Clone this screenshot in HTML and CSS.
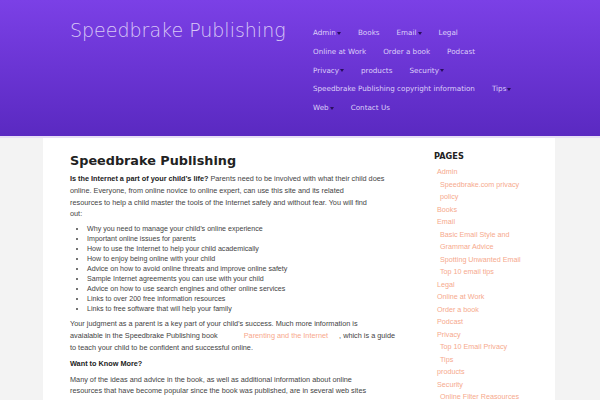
FILE: index.html
```html
<!DOCTYPE html>
<html lang="en">
<head>
    <meta charset="UTF-8">
    <title>Speedbrake Publishing</title>
    <link rel="stylesheet" href="styles.css">
</head>
<body>
    <header class="site-header">
        <div class="header-inner">
            <div class="site-title">Speedbrake Publishing</div>
            <nav class="main-nav">
                <div class="nav-row">
                    <a class="has-sub">Admin</a>
                    <a>Books</a>
                    <a class="has-sub">Email</a>
                    <a>Legal</a>
                </div>
                <div class="nav-row">
                    <a>Online at Work</a>
                    <a>Order a book</a>
                    <a>Podcast</a>
                </div>
                <div class="nav-row">
                    <a class="has-sub">Privacy</a>
                    <a>products</a>
                    <a class="has-sub">Security</a>
                </div>
                <div class="nav-row">
                    <a>Speedbrake Publishing copyright information</a>
                    <a class="has-sub">Tips</a>
                </div>
                <div class="nav-row">
                    <a class="has-sub">Web</a>
                    <a>Contact Us</a>
                </div>
            </nav>
        </div>
    </header>

    <div class="page">
        <main class="content">
            <h1>Speedbrake Publishing</h1>
            <p class="intro"><strong>Is the Internet a part of your child’s life?</strong> Parents need to be involved with what their child does<br>
            online. Everyone, from online novice to online expert, can use this site and its related<br>
            resources to help a child master the tools of the Internet safely and without fear. You will find<br>
            out:</p>
            <ul>
                <li>Why you need to manage your child’s online experience</li>
                <li>Important online issues for parents</li>
                <li>How to use the Internet to help your child academically</li>
                <li>How to enjoy being online with your child</li>
                <li>Advice on how to avoid online threats and improve online safety</li>
                <li>Sample Internet agreements you can use with your child</li>
                <li>Advice on how to use search engines and other online services</li>
                <li>Links to over 200 free information resources</li>
                <li>Links to free software that will help your family</li>
            </ul>
            <p>Your judgment as a parent is a key part of your child’s success. Much more information is<br>
            avaialable in the Speedbrake Publishing book <a class="book-link">Parenting and the Internet</a>, which is a guide<br>
            to teach your child to be confident and successful online.</p>
            <p><strong>Want to Know More?</strong></p>
            <p>Many of the ideas and advice in the book, as well as additional information about online<br>
            resources that have become popular since the book was published, are in several web sites</p>
        </main>

        <aside class="sidebar">
            <h3>PAGES</h3>
            <ul class="page-list">
                <li>Admin</li>
                <li class="sub">Speedbrake.com privacy policy</li>
                <li>Books</li>
                <li>Email</li>
                <li class="sub">Basic Email Style and Grammar Advice</li>
                <li class="sub">Spotting Unwanted Email</li>
                <li class="sub">Top 10 email tips</li>
                <li>Legal</li>
                <li>Online at Work</li>
                <li>Order a book</li>
                <li>Podcast</li>
                <li>Privacy</li>
                <li class="sub">Top 10 Email Privacy</li>
                <li class="sub">Tips</li>
                <li>products</li>
                <li>Security</li>
                <li class="sub">Online Filter Reasources</li>
            </ul>
        </aside>
    </div>
</body>
</html>
```

FILE: styles.css
```css
body { margin: 0; background: #f3f3f3; font-family: "Liberation Sans", Arial, sans-serif; overflow: hidden; }
a { text-decoration: none; }

.site-header { height: 136px; background: linear-gradient(#7b40e6, #5a29c1); border-bottom: 2px solid #e6def5; }
.header-inner { display: flex; padding: 19px 0 0 70px; }
.site-title { width: 243px; font-family: "DejaVu Sans", sans-serif; font-weight: 200; font-size: 19px; color: #d9c9f6; }
.main-nav { padding-top: 9px; }
.nav-row { display: flex; gap: 17px; height: 18.8px; }
.nav-row a { font-family: "DejaVu Sans", sans-serif; font-size: 7.2px; color: #ddd0f8; }
.has-sub::after { content: ""; display: inline-block; border: 2.5px solid transparent; border-top: 3px solid #2a0f5e; border-bottom: 0; margin-left: 1px; vertical-align: middle; }

.page { display: flex; width: 512px; margin-left: 43px; background: #fff; min-height: 270px; }
.content { width: 340px; padding: 15px 23px 0 27px; font-size: 7.3px; color: #444; white-space: nowrap; }
.content h1 { font-family: "DejaVu Sans", sans-serif; font-size: 12.8px; line-height: 16px; margin: 0; color: #222; }
.content p { margin: 0 0 4.2px; line-height: 11.8px; }
.content .intro { margin: 4px 0 3.8px; }
.content strong { color: #222; }
.content ul { margin: 0 0 4px; padding-left: 17px; font-size: 7.1px; line-height: 10px; }
.book-link { color: #f7a88c; margin: 0 11px 0 24px; }

.sidebar { flex: 1; padding-top: 13px; padding-left: 1px; }
.sidebar h3 { margin: 0 0 5px; font-family: "DejaVu Sans", sans-serif; font-size: 8.2px; color: #222; }
.page-list { list-style: none; margin: 0; padding: 0 0 0 3px; font-size: 7.2px; line-height: 12.5px; color: #f6a98d; width: 90px; }
.page-list .sub { padding-left: 3px; }
```
